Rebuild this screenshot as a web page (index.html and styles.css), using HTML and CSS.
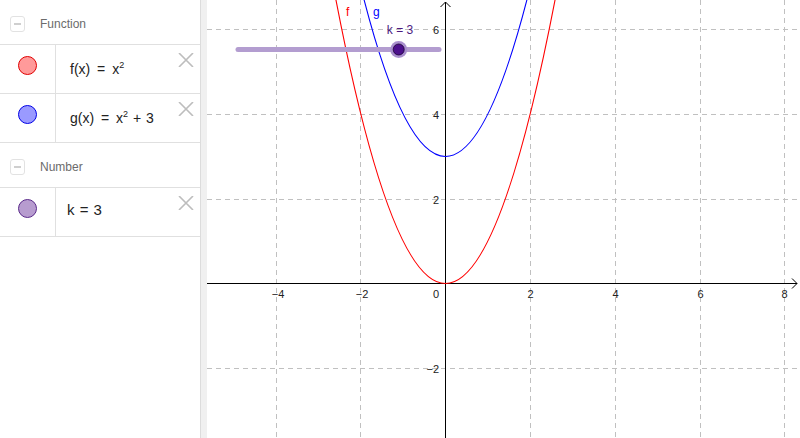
FILE: index.html
```html
<!DOCTYPE html>
<html>
<head>
<meta charset="utf-8">
<link rel="stylesheet" href="styles.css">
</head>
<body>
<div class="app">
  <aside class="algebra">
    <div class="group">
      <span class="collapse"></span>
      <span class="group-label">Function</span>
    </div>
    <div class="item">
      <div class="marker"><span class="dot dot-f"></span></div>
      <div class="formula">f(x) <span class="eq">=</span> x<sup>2</sup></div>
      <svg class="close" width="16" height="14" viewBox="0 0 16 14"><path d="M1 0 L15 14 M15 0 L1 14" stroke="#bdbdbd" stroke-width="1.6" fill="none"/></svg>
    </div>
    <div class="item">
      <div class="marker"><span class="dot dot-g"></span></div>
      <div class="formula">g(x) <span class="eq">=</span> x<sup>2</sup> <span class="op">+</span> 3</div>
      <svg class="close" width="16" height="14" viewBox="0 0 16 14"><path d="M1 0 L15 14 M15 0 L1 14" stroke="#bdbdbd" stroke-width="1.6" fill="none"/></svg>
    </div>
    <div class="group">
      <span class="collapse"></span>
      <span class="group-label">Number</span>
    </div>
    <div class="item">
      <div class="marker"><span class="dot dot-k"></span></div>
      <div class="formula formula-k">k <span class="eq">=</span> 3</div>
      <svg class="close" width="16" height="14" viewBox="0 0 16 14"><path d="M1 0 L15 14 M15 0 L1 14" stroke="#bdbdbd" stroke-width="1.6" fill="none"/></svg>
    </div>
  </aside>
  <div class="splitter"></div>
  <main class="graphics">
    <svg class="canvas" width="593" height="438" viewBox="207 0 593 438">
      <g stroke="#c0c0c0" stroke-width="1" stroke-dasharray="5 4" fill="none">
        <line x1="276.5" y1="0" x2="276.5" y2="438"/>
        <line x1="360.5" y1="0" x2="360.5" y2="438"/>
        <line x1="530.5" y1="0" x2="530.5" y2="438"/>
        <line x1="615.5" y1="0" x2="615.5" y2="438"/>
        <line x1="700.5" y1="0" x2="700.5" y2="438"/>
        <line x1="784.5" y1="0" x2="784.5" y2="438"/>
        <line x1="207" y1="29.5" x2="800" y2="29.5"/>
        <line x1="207" y1="114.5" x2="800" y2="114.5"/>
        <line x1="207" y1="199.5" x2="800" y2="199.5"/>
        <line x1="207" y1="368.5" x2="800" y2="368.5"/>
      </g>
      <g stroke="#000" stroke-width="1" fill="none">
        <line x1="207" y1="283.5" x2="797" y2="283.5"/>
        <path d="M792 278.5 L797 283.5 L792 288.5"/>
        <line x1="445.5" y1="438" x2="445.5" y2="2"/>
        <path d="M440.5 7 L445.5 2 L450.5 7"/>
      </g>
      <g class="ticks" fill="#222">
        <text x="278" y="297.5" text-anchor="middle">&#8722;4</text>
        <text x="362" y="297.5" text-anchor="middle">&#8722;2</text>
        <text x="530.5" y="297.5" text-anchor="middle">2</text>
        <text x="615.5" y="297.5" text-anchor="middle">4</text>
        <text x="700.5" y="297.5" text-anchor="middle">6</text>
        <text x="784.5" y="297.5" text-anchor="middle">8</text>
        <text x="439" y="297.5" text-anchor="end">0</text>
        <text x="439" y="33.5" text-anchor="end">6</text>
        <text x="439" y="118.5" text-anchor="end">4</text>
        <text x="439" y="203.5" text-anchor="end">2</text>
        <text x="439" y="372.5" text-anchor="end">&#8722;2</text>
      </g>
      <path d="M331.2 -25.2 Q445.5 592.2 559.8 -25.2" stroke="#ff0000" stroke-width="1.1" fill="none"/>
      <path d="M356.6 -30.3 Q445.5 343.2 534.4 -30.3" stroke="#0000ff" stroke-width="1.1" fill="none"/>
      <text class="curve-label" x="346" y="16" fill="#ff0000">f</text>
      <text class="curve-label" x="373" y="16" fill="#0000ff">g</text>
      <line x1="238" y1="49.5" x2="439" y2="49.5" stroke="#b39dd0" stroke-width="5" stroke-linecap="round"/>
      <circle cx="398.7" cy="49.5" r="8.5" fill="#a98fce"/>
      <circle cx="398.7" cy="49.5" r="5.5" fill="#4c0f8c" stroke="#1a0033" stroke-width="0.8"/>
      <text class="slider-label" x="400" y="34" text-anchor="middle" fill="#4c1a80">k = 3</text>
    </svg>
  </main>
</div>
</body>
</html>
```
FILE: styles.css
```css
html, body {
  margin: 0;
  padding: 0;
  background: #fff;
}
body {
  width: 800px;
  height: 438px;
  overflow: hidden;
  font-family: "Liberation Sans", Arial, sans-serif;
}
.app {
  display: flex;
  height: 438px;
}
.algebra {
  width: 201px;
  box-sizing: border-box;
  border-right: 1px solid #dcdcdc;
  background: #fff;
  flex: none;
}
.splitter {
  width: 6px;
  flex: none;
  background: #f0f0f0;
}
.graphics {
  flex: 1;
  position: relative;
  overflow: hidden;
}
.canvas {
  display: block;
}
.group {
  height: 45px;
  box-sizing: border-box;
  border-bottom: 1px solid #e0e0e0;
  display: flex;
  align-items: center;
  padding-left: 10px;
  padding-top: 4px;
}
.collapse {
  width: 13px;
  height: 14px;
  border: 1px solid #e2e2e2;
  border-radius: 3px;
  position: relative;
}
.collapse::after {
  content: "";
  position: absolute;
  left: 3px;
  right: 3px;
  top: 6px;
  height: 2px;
  background: #cfcfcf;
}
.group-label {
  margin-left: 15px;
  font-size: 12px;
  color: #6b6b6b;
  margin-top: -1px;
}
.item {
  height: 49px;
  box-sizing: border-box;
  border-bottom: 1px solid #e0e0e0;
  display: flex;
}
.marker {
  width: 56px;
  flex: none;
  box-sizing: border-box;
  border-right: 1px solid #e0e0e0;
  display: flex;
  justify-content: center;
  align-items: flex-start;
  padding-top: 11px;
}
.dot {
  width: 19px;
  height: 19px;
  border-radius: 50%;
  box-sizing: border-box;
  border: 1px solid;
}
.dot-f {
  background: #ff9a9a;
  border-color: #e00000;
}
.dot-g {
  background: #9a9aff;
  border-color: #0000e6;
}
.dot-k {
  background: #b79ccf;
  border-color: #5a2a8a;
}
.formula {
  flex: 1;
  padding-left: 14px;
  padding-top: 14px;
  font-size: 14px;
  line-height: 20px;
  color: #222;
  white-space: nowrap;
}
.formula sup {
  font-size: 9px;
  vertical-align: 6px;
  line-height: 0;
}
.eq {
  margin: 0 3px;
}
.op {
  margin: 0 1px;
}
.formula-k {
  padding-left: 11px;
  padding-top: 12px;
  font-size: 15px;
}
.formula-k .eq {
  margin: 0 1px;
}
.close {
  flex: none;
  margin-top: 8px;
  margin-right: 6px;
}
.ticks text {
  font-family: "Liberation Sans", Arial, sans-serif;
  font-size: 11px;
}
.curve-label {
  font-family: "Liberation Sans", Arial, sans-serif;
  font-size: 12px;
}
.slider-label {
  font-family: "Liberation Sans", Arial, sans-serif;
  font-size: 12px;
}
```
